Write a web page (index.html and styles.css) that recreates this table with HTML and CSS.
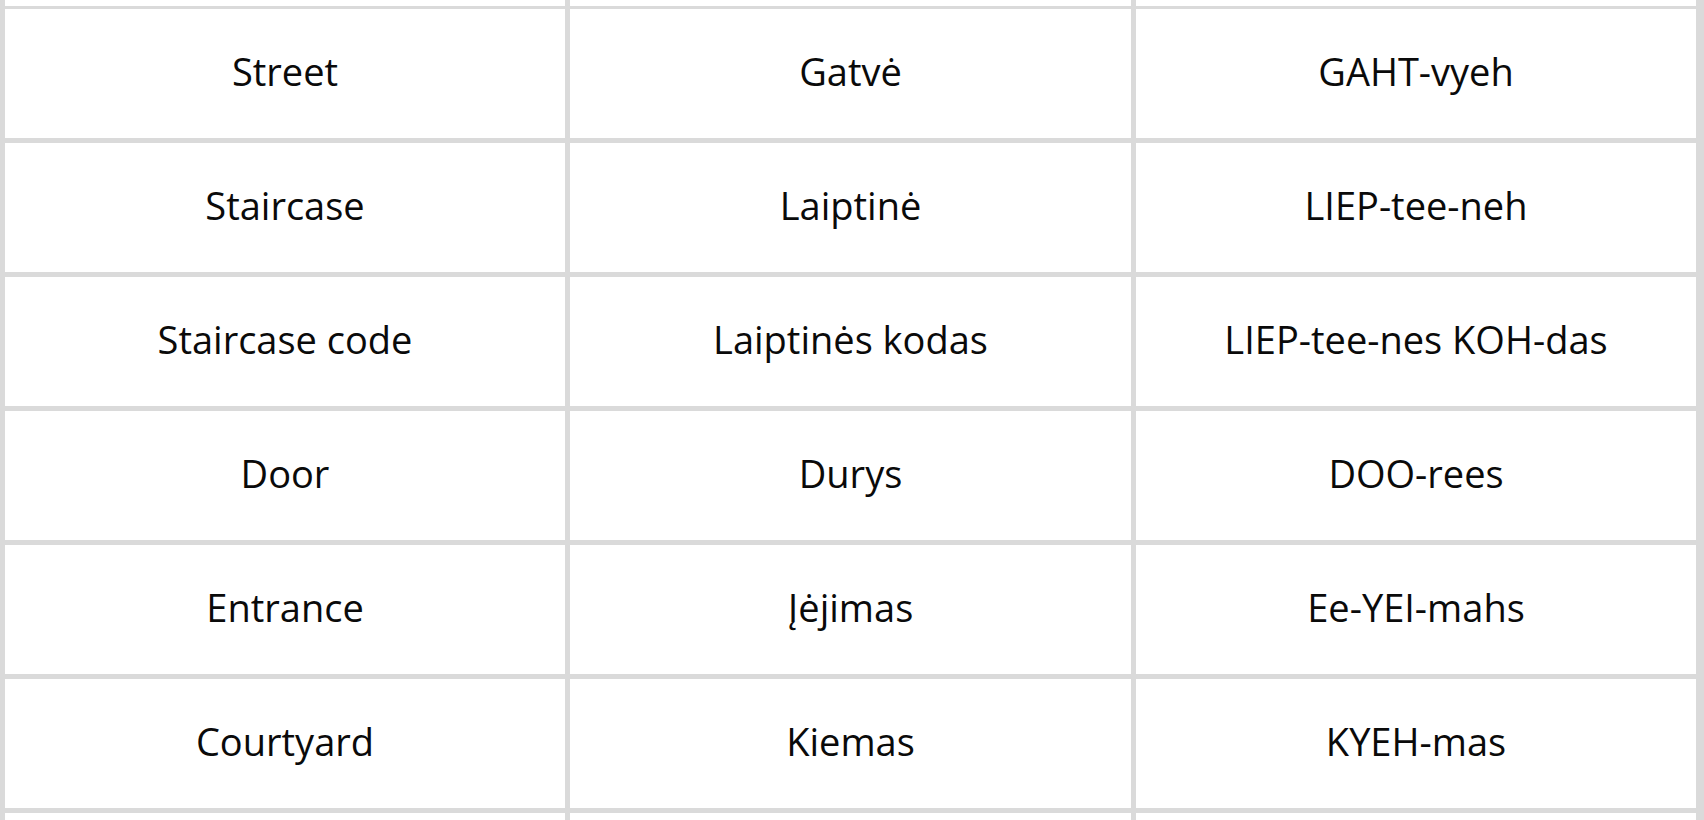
FILE: index.html
```html
<!DOCTYPE html>
<html lang="en">
<head>
<meta charset="utf-8">
<title>Lithuanian vocabulary</title>
<link rel="stylesheet" href="styles.css">
</head>
<body>
<div class="table">
  <div class="cell stub"></div><div class="cell stub"></div><div class="cell stub"></div>
  <div class="cell">Street</div><div class="cell">Gatvė</div><div class="cell">GAHT-vyeh</div>
  <div class="cell">Staircase</div><div class="cell">Laiptinė</div><div class="cell">LIEP-tee-neh</div>
  <div class="cell">Staircase code</div><div class="cell">Laiptinės kodas</div><div class="cell">LIEP-tee-nes KOH-das</div>
  <div class="cell">Door</div><div class="cell">Durys</div><div class="cell">DOO-rees</div>
  <div class="cell">Entrance</div><div class="cell">Įėjimas</div><div class="cell">Ee-YEI-mahs</div>
  <div class="cell">Courtyard</div><div class="cell">Kiemas</div><div class="cell">KYEH-mas</div>
  <div class="cell stub"></div><div class="cell stub"></div><div class="cell stub"></div>
</div>
</body>
</html>
```
FILE: styles.css
```css
html, body {
  margin: 0;
  padding: 0;
  background: #ffffff;
  overflow: hidden;
}
.table {
  display: grid;
  grid-template-columns: 560px 561px 560px;
  grid-template-rows: 4px repeat(6, 129px) 40px;
  gap: 5px;
  padding: 0 8px 0 5px;
  width: 1704px;
  box-sizing: border-box;
  background: #dadada;
  font-family: "Open Sans", "Lato", sans-serif;
  font-size: 38px;
  font-weight: 500;
  color: #0a0a0a;
}
.cell {
  background: #ffffff;
  display: flex;
  align-items: center;
  justify-content: center;
  text-align: center;
  padding-bottom: 6px;
  box-sizing: border-box;
}
```
